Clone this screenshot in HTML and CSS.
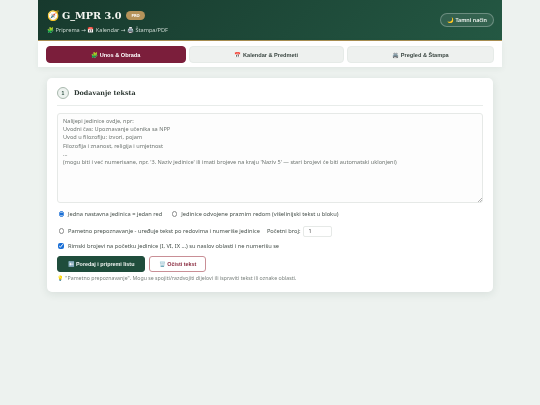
FILE: index.html
```html
<!DOCTYPE html>
<html lang="bs">
<head>
<meta charset="utf-8">
<title>G_MPR 3.0</title>
<link rel="stylesheet" href="styles.css">
</head>
<body>
<div class="app">
  <header class="hero">
    <div class="hero-left">
      <div class="brand"><span class="compass">🧭</span><h1>G_MPR 3.0</h1><span class="pro">PRO</span></div>
      <div class="crumbs">🧩 Priprema <span class="arrow">→</span> 📅 Kalendar <span class="arrow">→</span> 🖨️ Štampa/PDF</div>
    </div>
    <button class="theme">🌙 Tamni način</button>
  </header>
  <nav class="tabs">
    <button class="tab active">🧩 Unos &amp; Obrada</button>
    <button class="tab">📅 Kalendar &amp; Predmeti</button>
    <button class="tab">🖨️ Pregled &amp; Štampa</button>
  </nav>
  <main class="main">
    <section class="card">
      <div class="card-head"><span class="step">1</span><h2>Dodavanje teksta</h2></div>
      <textarea class="input" placeholder="Nalijepi jedinice ovdje, npr:
Uvodni čas: Upoznavanje učenika sa NPP
Uvod u filozofiju: izvori, pojam
Filozofija i znanost, religija i umjetnost
...
(mogu biti i već numerisane, npr. '3. Naziv jedinice' ili imati brojeve na kraju 'Naziv 5' — stari brojevi će biti automatski uklonjeni)"></textarea>
      <div class="row r1">
        <label class="opt"><input type="radio" name="m" checked>Jedna nastavna jedinica = jedan red</label>
        <label class="opt"><input type="radio" name="m">Jedinice odvojene praznim redom (višelinijski tekst u bloku)</label>
      </div>
      <div class="row r2">
        <label class="opt"><input type="radio" name="m">Pametno prepoznavanje - uređuje tekst po redovima i numeriše jedinice</label>
        <label class="start">Početni broj:<input class="num" type="text" value="1"></label>
      </div>
      <div class="row r3">
        <label class="opt"><input type="checkbox" checked>Rimski brojevi na početku jedinice (I, VI, IX ...) su naslov oblasti i ne numerišu se</label>
      </div>
      <div class="actions">
        <button class="btn primary">⬅️ Poredaj i pripremi listu</button>
        <button class="btn ghost">🗑️ Očisti tekst</button>
      </div>
      <p class="hint">💡 "Pametno prepoznavanje". Mogu se spojiti/razdvojiti dijelovi ili ispraviti tekst ili oznake oblasti.</p>
    </section>
  </main>
</div>
</body>
</html>
```
FILE: styles.css
```css
* { box-sizing: border-box; }
html, body { margin: 0; height: 100%; }
body {
  background: #edf2ef;
  font-family: "Noto Sans", "Open Sans", sans-serif;
  color: #3a4540;
  overflow: hidden;
}
.app {
  width: 464px;
  margin: 0 auto;
  filter: blur(.3px);
}
.hero {
  height: 41px;
  background: linear-gradient(135deg, #17392d, #245843);
  border-bottom: 1px solid #a98f52;
  padding: 0 8px 0 9px;
  display: flex;
  align-items: center;
  justify-content: space-between;
}
.brand { display: flex; align-items: center; height: 15px; margin-top: 1px; }
.compass { font-size: 10px; line-height: 1; margin-right: 3px; }
.brand h1 {
  margin: 0;
  font: bold 9.7px "DejaVu Serif", serif;
  color: #f4f6f1;
}
.pro {
  margin-left: 5px;
  background: #b5935a;
  color: #fff;
  font-size: 4px;
  font-weight: 700;
  padding: 2px 5px;
  border-radius: 6px;
  line-height: 5px;
}
.crumbs { font-size: 5.6px; color: #c9d6cf; line-height: 8px; margin-top: 3px; }
.arrow { font-family: "DejaVu Sans", sans-serif; }
.theme {
  height: 14px;
  padding: 0 6px;
  border: 1px solid rgba(255,255,255,.28);
  background: rgba(255,255,255,.08);
  border-radius: 8px;
  color: #f0f3f0;
  font: 600 5.4px "Noto Sans", sans-serif;
}
.tabs {
  background: #fff;
  padding: 5px 8px 4px;
  display: grid;
  grid-template-columns: 139.5px 1fr 147px;
  gap: 3.5px;
  box-shadow: 0 2px 6px rgba(30,60,45,.06);
}
.tab {
  height: 17px;
  border: 1px solid #e6ebe8;
  border-radius: 4px;
  background: #eef1ef;
  color: #3c4843;
  font: 700 5.6px "Liberation Sans", sans-serif;
  padding: 0;
}
.tab.active { background: #7b1e3b; border-color: #7b1e3b; color: #fff; }
.main { padding: 11px 9px 0; }
.card {
  background: #fff;
  border-radius: 5px;
  padding: 9px 10px 9px;
  height: 214px;
  box-shadow: 0 2px 8px rgba(30,60,45,.1);
}
.card-head {
  display: flex;
  align-items: center;
  gap: 5px;
  padding-bottom: 6px;
  border-bottom: 1px solid #e8ecea;
  height: 19px;
}
.step {
  width: 12px;
  height: 12px;
  border-radius: 50%;
  border: 1px solid #a9b9ae;
  background: #edf2ef;
  color: #274a3b;
  font: 700 5px/10px "Liberation Sans", sans-serif;
  text-align: center;
}
.card-head h2 {
  margin: 0;
  font: bold 6.4px "DejaVu Serif", serif;
  color: #2a3530;
}
.input {
  display: block;
  width: 100%;
  height: 90px;
  margin-top: 7px;
  padding: 3px 5px;
  border: 1px solid #e6e9e7;
  border-radius: 3px;
  background: #fdfdfd;
  font: 5.6px/8.2px "Noto Sans", sans-serif;
  color: #444;
  outline: none;
}
.input::placeholder { color: #6f7672; opacity: 1; }
.input::-webkit-resizer {
  background: linear-gradient(135deg, transparent 55%, #b5b5b5 55%, #b5b5b5 65%, transparent 65%, transparent 78%, #b5b5b5 78%, #b5b5b5 88%, transparent 88%) no-repeat right bottom / 5px 5px;
}
.row {
  display: flex;
  align-items: center;
  font-size: 5.7px;
  color: #46504b;
}
.r1 { margin-top: 6px; height: 10px; gap: 8px; }
.r2 { margin-top: 6px; height: 12px; gap: 7px; }
.r3 { margin-top: 4px; height: 10px; }
.opt { display: flex; align-items: center; white-space: nowrap; }
.opt input[type="radio"] {
  appearance: none;
  width: 5.5px;
  height: 5.5px;
  margin: 0 4px 0 1.5px;
  border: .5px solid #8d8d8d;
  border-radius: 50%;
  background: #fff;
}
.opt input[type="radio"]:checked {
  border-color: #1a6fd6;
  background: radial-gradient(circle, #1a6fd6 0 55%, #fff 65%);
}
.opt input[type="checkbox"] { width: 6px; height: 6px; margin: 0 4px 0 1px; accent-color: #1a6fd6; }
.start { display: flex; align-items: center; gap: 3px; white-space: nowrap; }
.num {
  width: 29px;
  height: 11px;
  border: 1px solid #e6e9e7;
  border-radius: 2px;
  padding: 0 4px;
  font: 5.4px "Noto Sans", sans-serif;
  color: #444;
}
.actions { display: flex; gap: 4px; margin-top: 5px; }
.btn {
  height: 16px;
  border-radius: 3px;
  font: 700 5.4px "Liberation Sans", sans-serif;
  padding: 0;
}
.primary { width: 88px; background: #1f4d3c; border: 1px solid #1f4d3c; color: #f0f4f1; }
.ghost { width: 57px; background: #fff; border: 1px solid #c98f96; color: #8b2c40; }
.hint { margin: 2px 0 0; font-size: 5.25px; line-height: 8px; color: #7a817d; }
```
